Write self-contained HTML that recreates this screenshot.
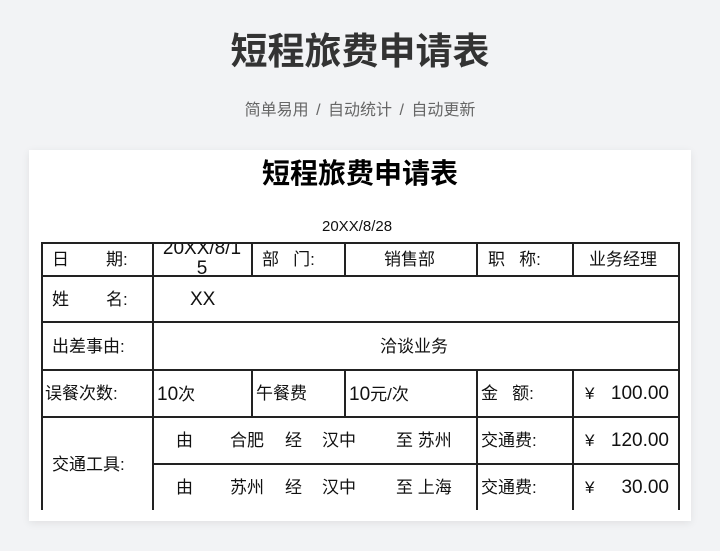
<!DOCTYPE html><html><head><meta charset="utf-8"><style>
body{margin:0;width:720px;height:551px;background:#f2f3f5;font-family:"Liberation Sans","Noto Sans CJK SC",sans-serif;position:relative;overflow:hidden}
.a{position:absolute;white-space:nowrap;line-height:1}
.h{position:absolute;height:2px;background:#222}
.v{position:absolute;width:2px;background:#222}
.t{font-size:17px;color:#111}
.n{font-size:19px}
</style></head><body>
<div class="a" style="left:0;width:720px;text-align:center;top:33px;font-size:37px;font-weight:bold;color:#333">短程旅费申请表</div>
<div class="a" style="left:0;width:720px;text-align:center;top:103px;font-size:16px;color:#666;word-spacing:3px">简单易用 / 自动统计 / 自动更新</div>
<div style="position:absolute;left:29px;top:150px;width:662px;height:371px;background:#fff;box-shadow:0 2px 8px rgba(0,0,0,.08)"></div>
<div class="a" style="left:29px;width:662px;text-align:center;top:160px;font-size:28px;font-weight:bold;color:#000">短程旅费申请表</div>
<div class="a" style="left:322px;top:219px;font-size:15px;color:#111">20XX/8/28</div>
<div class="h" style="left:41px;width:639px;top:242px"></div>
<div class="h" style="left:41px;width:639px;top:275px"></div>
<div class="h" style="left:41px;width:639px;top:321px"></div>
<div class="h" style="left:41px;width:639px;top:369px"></div>
<div class="h" style="left:41px;width:639px;top:416px"></div>
<div class="h" style="left:153px;width:527px;top:463px"></div>
<div class="v" style="left:41px;top:242px;height:268px"></div>
<div class="v" style="left:152px;top:242px;height:268px"></div>
<div class="v" style="left:678px;top:242px;height:268px"></div>
<div class="v" style="left:251px;top:242px;height:34px"></div>
<div class="v" style="left:344px;top:242px;height:34px"></div>
<div class="v" style="left:476px;top:242px;height:34px"></div>
<div class="v" style="left:572px;top:242px;height:34px"></div>
<div class="v" style="left:251px;top:369px;height:48px"></div>
<div class="v" style="left:344px;top:369px;height:48px"></div>
<div class="v" style="left:476px;top:369px;height:141px"></div>
<div class="v" style="left:572px;top:369px;height:141px"></div>
<div class="a t" style="left:52px;top:251px">日</div><div class="a t" style="left:106px;top:251px">期:</div>
<div style="position:absolute;left:154px;top:244px;width:97px;height:31px;overflow:hidden"><div class="a t n" style="left:6px;top:-5px;line-height:20px;white-space:normal;word-break:break-all;width:84px;text-align:center">20XX/8/15</div></div>
<div class="a t" style="left:262px;top:251px">部 &nbsp;&nbsp;门:</div>
<div class="a t" style="left:384px;top:251px">销售部</div>
<div class="a t" style="left:488px;top:251px">职 &nbsp;&nbsp;称:</div>
<div class="a t" style="left:589px;top:251px">业务经理</div>
<div class="a t" style="left:52px;top:291px">姓</div><div class="a t" style="left:106px;top:291px">名:</div>
<div class="a t n" style="left:190px;top:290px">XX</div>
<div class="a t" style="left:52px;top:338px">出差事由:</div>
<div class="a t" style="left:380px;top:338px">洽谈业务</div>
<div class="a t" style="left:45px;top:385px">误餐次数:</div>
<div class="a t" style="left:157px;top:385px"><span class="n">10</span>次</div>
<div class="a t" style="left:256px;top:385px">午餐费</div>
<div class="a t" style="left:349px;top:385px"><span class="n">10</span>元/次</div>
<div class="a t" style="left:481px;top:385px">金 &nbsp;&nbsp;额:</div>
<div class="a t" style="left:585px;top:385px">¥</div><div class="a t n" style="left:590px;top:384px;width:79px;text-align:right">100.00</div>
<div class="a t" style="left:52px;top:456px">交通工具:</div>
<div class="a t" style="left:176px;top:432px">由</div><div class="a t" style="left:230px;top:432px">合肥</div><div class="a t" style="left:285px;top:432px">经</div><div class="a t" style="left:322px;top:432px">汉中</div><div class="a t" style="left:396px;top:432px">至 苏州</div>
<div class="a t" style="left:481px;top:432px">交通费:</div>
<div class="a t" style="left:585px;top:432px">¥</div><div class="a t n" style="left:590px;top:431px;width:79px;text-align:right">120.00</div>
<div class="a t" style="left:176px;top:479px">由</div><div class="a t" style="left:230px;top:479px">苏州</div><div class="a t" style="left:285px;top:479px">经</div><div class="a t" style="left:322px;top:479px">汉中</div><div class="a t" style="left:396px;top:479px">至 上海</div>
<div class="a t" style="left:481px;top:479px">交通费:</div>
<div class="a t" style="left:585px;top:479px">¥</div><div class="a t n" style="left:590px;top:478px;width:79px;text-align:right">30.00</div>
</body></html>
